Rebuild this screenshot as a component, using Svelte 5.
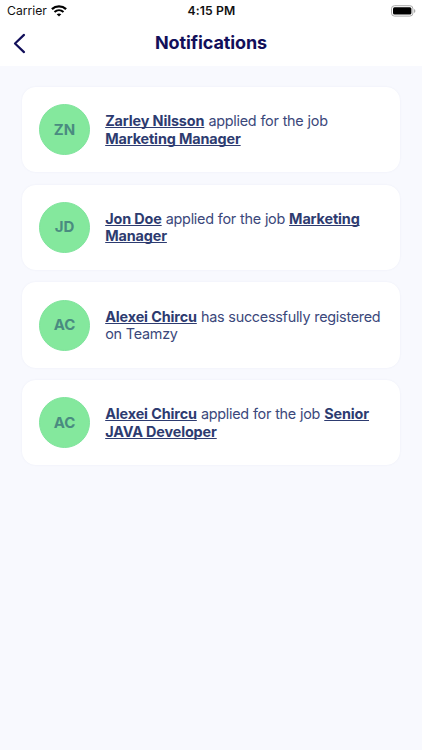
<script>
  const notifications = [
    { initials: 'ZN', name: 'Zarley Nilsson', action: 'applied for the job', subject: 'Marketing Manager' },
    { initials: 'JD', name: 'Jon Doe', action: 'applied for the job', subject: 'Marketing Manager' },
    { initials: 'AC', name: 'Alexei Chircu', action: 'has successfully registered on Teamzy', subject: '' },
    { initials: 'AC', name: 'Alexei Chircu', action: 'applied for the job', subject: 'Senior JAVA Developer' }
  ];
</script>

<div class="screen">
  <header>
    <div class="status">
      <div class="carrier">
        <span>Carrier</span>
        <svg class="wifi" width="16" height="12" viewBox="0 0 16 12" fill="none" stroke="#000">
          <path d="M.9 4.2C4.9.5 11.1.5 15.1 4.2" stroke-width="2.3" />
          <path d="M3.5 7c2.6-2.3 6.4-2.3 9 0" stroke-width="2.1" />
          <path d="M8 11.6 5.7 9.2c1.3-1.1 3.3-1.1 4.6 0z" fill="#000" stroke="none" />
        </svg>
      </div>
      <span class="time">4:15 PM</span>
      <svg class="battery" width="26" height="12" viewBox="0 0 26 12">
        <rect x="1.5" y=".7" width="21.4" height="10.4" rx="3" fill="#fff" stroke="#aaa" stroke-width="1" />
        <rect x="3" y="2.2" width="18.4" height="7.4" rx="1.5" fill="#000" />
        <path d="M24.2 4v4c1.5-.5 1.5-3.5 0-4z" fill="#999" />
      </svg>
    </div>
    <nav>
      <button aria-label="Back">
        <svg width="13" height="21" viewBox="0 0 13 21" fill="none" stroke="#120f5a" stroke-width="2.2" stroke-linecap="round" stroke-linejoin="round">
          <path d="M11 1.9 2 10.5l9 8.6" />
        </svg>
      </button>
      <h1>Notifications</h1>
      <span></span>
    </nav>
  </header>
  <main>
    {#each notifications as n}
      <article>
        <div class="avatar">{n.initials}</div>
        <p><b>{n.name}</b> {n.action} {#if n.subject}<b>{n.subject}</b>{/if}</p>
      </article>
    {/each}
  </main>
</div>

<style>
  :global(body) { margin: 0; }
  .screen {
    width: 422px;
    height: 750px;
    overflow: hidden;
    background: #f8f9fe;
    font-family: Inter, "Liberation Sans", sans-serif;
  }
  header { height: 65.5px; background: #fff; }
  .status, nav {
    display: grid;
    grid-template-columns: 1fr auto 1fr;
    align-items: center;
  }
  .status {
    height: 21px;
    padding: 0 6px 0 7px;
    font-size: 12.2px;
    color: #111;
  }
  .carrier { display: flex; align-items: center; gap: 4.5px; }
  .time { font-weight: 600; letter-spacing: 0.15px; }
  .battery { justify-self: end; }
  nav { height: 44px; padding: 0 12.5px; }
  button {
    display: flex;
    justify-self: start;
    padding: 0;
    border: 0;
    background: none;
  }
  h1 {
    margin: 0;
    font-size: 18px;
    line-height: 24px;
    font-weight: 650;
    letter-spacing: -0.1px;
    color: #120f5a;
  }
  main {
    display: flex;
    flex-direction: column;
    gap: 12.3px;
    padding: 21.5px 22px 0;
  }
  article {
    box-sizing: border-box;
    display: flex;
    align-items: center;
    height: 85.4px;
    padding: 0 17px;
    border-radius: 14px;
    background: #fff;
    box-shadow: 0 0 2px rgba(80, 90, 150, 0.08);
  }
  .avatar {
    box-sizing: border-box;
    flex: none;
    display: grid;
    place-items: center;
    width: 51px;
    height: 51px;
    margin-right: 15.2px;
    padding-bottom: 1px;
    border: 1px solid #7fe49c;
    border-radius: 50%;
    background: #84e89d;
    color: #4a8b80;
    font-size: 15px;
    font-weight: 700;
  }
  p {
    flex: 1;
    margin: 0 -6px 0 0;
    font-size: 14.4px;
    line-height: 17.5px;
    letter-spacing: -0.27px;
    word-spacing: 0.3px;
    color: #3b487b;
  }
  b {
    font-weight: 650;
    letter-spacing: -0.13px;
    word-spacing: 0;
    color: #2d3b70;
    text-decoration: underline;
    text-decoration-thickness: 1.3px;
    text-underline-offset: 1.3px;
    text-decoration-skip-ink: none;
  }
</style>
